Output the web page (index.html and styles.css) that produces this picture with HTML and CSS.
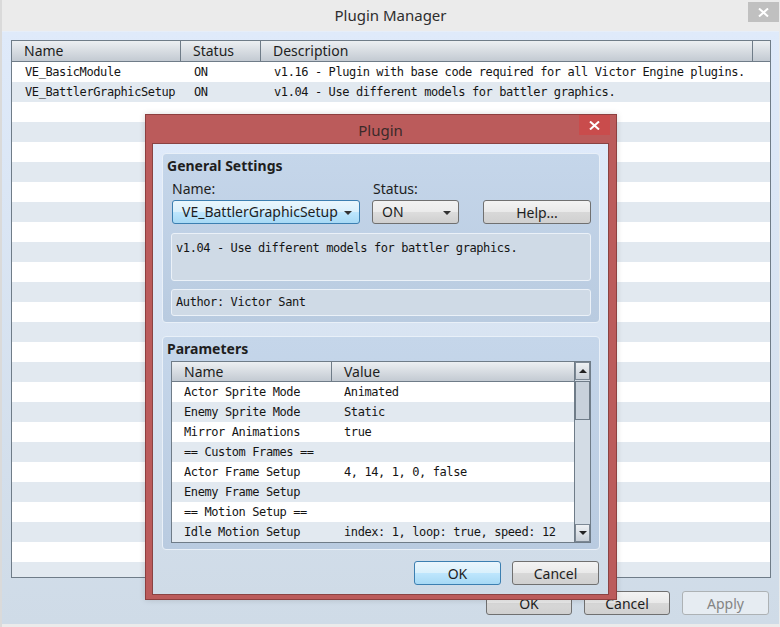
FILE: index.html
```html
<!DOCTYPE html>
<html lang="en">
<head>
    <meta charset="UTF-8">
    <meta name="viewport" content="width=device-width, initial-scale=1.0">
    <title>Plugin Manager</title>
    <link rel="stylesheet" href="styles.css">
</head>
<body>
    <div class="window">
        <div class="titlebar">
            <span class="title">Plugin Manager</span>
            <span class="close-btn gray">
                <svg width="11" height="9" viewBox="0 0 11 9"><path d="M1 0.5 L10 8.5 M10 0.5 L1 8.5" stroke="#fff" stroke-width="2"/></svg>
            </span>
        </div>

        <div class="client">
            <div class="grid">
                <div class="grid-head">
                    <div class="hcell">Name</div>
                    <div class="hcell">Status</div>
                    <div class="hcell">Description</div>
                    <div class="hcell last"></div>
                </div>
                <div class="grid-body" id="pluginRows">
                    <div class="grow"><span>VE_BasicModule</span><span>ON</span><span>v1.16 - Plugin with base code required for all Victor Engine plugins.</span></div>
                    <div class="grow"><span>VE_BattlerGraphicSetup</span><span>ON</span><span>v1.04 - Use different models for battler graphics.</span></div>
                </div>
            </div>
            <div class="footer">
                <button class="btn">OK</button>
                <button class="btn">Cancel</button>
                <button class="btn disabled">Apply</button>
            </div>
        </div>

        <!-- Plugin edit dialog, open on top of the manager -->
        <div class="dialog">
            <div class="dlg-title">
                <span class="title">Plugin</span>
                <span class="close-btn red">
                    <svg width="11" height="9" viewBox="0 0 11 9"><path d="M1 0.5 L10 8.5 M10 0.5 L1 8.5" stroke="#fff" stroke-width="2"/></svg>
                </span>
            </div>
            <div class="dlg-client">
                <div class="group general">
                    <div class="group-title">General Settings</div>
                    <div class="fields">
                        <label class="field-label">Name:</label>
                        <label class="field-label">Status:</label>
                        <span></span>
                        <div class="combo focused">VE_BattlerGraphicSetup<span class="arrow"></span></div>
                        <div class="combo">ON<span class="arrow"></span></div>
                        <button class="btn help">Help...</button>
                    </div>
                    <div class="textbox desc">v1.04 - Use different models for battler graphics.</div>
                    <div class="textbox author">Author: Victor Sant</div>
                </div>

                <div class="group params">
                    <div class="group-title">Parameters</div>
                    <div class="ptable">
                        <div class="plist">
                            <div class="phead">
                                <div class="hcell">Name</div>
                                <div class="hcell last">Value</div>
                            </div>
                            <div class="prow"><span>Actor Sprite Mode</span><span>Animated</span></div>
                            <div class="prow"><span>Enemy Sprite Mode</span><span>Static</span></div>
                            <div class="prow"><span>Mirror Animations</span><span>true</span></div>
                            <div class="prow"><span>== Custom Frames ==</span><span></span></div>
                            <div class="prow"><span>Actor Frame Setup</span><span>4, 14, 1, 0, false</span></div>
                            <div class="prow"><span>Enemy Frame Setup</span><span></span></div>
                            <div class="prow"><span>== Motion Setup ==</span><span></span></div>
                            <div class="prow"><span>Idle Motion Setup</span><span>index: 1, loop: true, speed: 12</span></div>
                        </div>
                        <div class="vscroll">
                            <div class="sbtn"><span class="tri up"></span></div>
                            <div class="track"><div class="thumb"></div></div>
                            <div class="sbtn"><span class="tri down"></span></div>
                        </div>
                    </div>
                </div>

                <div class="dlg-buttons">
                    <button class="btn default">OK</button>
                    <button class="btn">Cancel</button>
                </div>
            </div>
        </div>
    </div>

    <script>
        // fill the rest of the plugin list with empty striped rows
        const rowsEl = document.getElementById('pluginRows');
        for (let i = 0; i < 24; i++) {
            const row = document.createElement('div');
            row.className = 'grow';
            row.innerHTML = '<span></span><span></span><span></span>';
            rowsEl.appendChild(row);
        }
    </script>
</body>
</html>
```

FILE: styles.css
```css
body {
    margin: 0;
    width: 780px;
    height: 627px;
    overflow: hidden;
    font-family: "Noto Sans", "Liberation Sans", sans-serif;
    font-size: 14px;
    color: #1e1e1e;
}
button {
    font-family: inherit;
    font-size: 14px;
}
.window {
    position: relative;
    height: 627px;
    box-sizing: border-box;
    display: flex;
    flex-direction: column;
    background: #ebebeb;
    border-left: 2px solid #dadada;
    padding: 0 1px 3px 0;
}
.titlebar {
    height: 31px;
    display: grid;
    grid-template-columns: 1fr auto 1fr;
    line-height: 31px;
}
.title {
    grid-column: 2;
    font-size: 15px;
    color: #2e2e2e;
}
.close-btn {
    grid-column: 3;
    justify-self: end;
    align-self: start;
    width: 31px;
    height: 20px;
    display: flex;
    align-items: center;
    justify-content: center;
}
.close-btn.gray {
    margin-top: 2px;
    background: #c0c0c0;
}
.close-btn.red {
    background: #c94c4c;
    margin-right: -1px;
}
.client {
    flex: 1;
    min-height: 0;
    display: flex;
    flex-direction: column;
    padding: 8px 8px 9px 9px;
    background: linear-gradient(#dfeafa, #cfdbe7);
    border-top: 1px solid #e6eef9;
}
.grid {
    flex: 1;
    min-height: 0;
    border: 1px solid #6f7c88;
    background: #fff;
    overflow: hidden;
}
.grid-head, .grow {
    display: grid;
    grid-template-columns: 169px 80px 492px 1fr;
}
.grid-head {
    height: 20px;
    border-bottom: 1px solid #6f7c88;
}
.hcell {
    background: linear-gradient(#eceff2, #c3cad2);
    border-right: 1px solid #6f7c88;
    padding-left: 12px;
    line-height: 20px;
    font-size: 14px;
}
.hcell.last {
    border-right: none;
}
.grow, .prow, .textbox {
    font-family: "DejaVu Sans Mono", "Liberation Mono", monospace;
    font-size: 12px;
    letter-spacing: -0.4px;
    color: #141414;
}
.grow {
    height: 20px;
    line-height: 21px;
    white-space: nowrap;
}
.grow span {
    padding-left: 13px;
}
.grow:nth-child(even) {
    background: #e2e9f0;
}
.footer {
    display: flex;
    justify-content: flex-end;
    gap: 12px;
    margin-top: 13px;
    padding-right: 2px;
}
.btn {
    width: 86px;
    height: 24px;
    padding: 0;
    border: 1px solid #707070;
    border-radius: 3px;
    background: linear-gradient(#f3f3f3 0%, #e9e9e9 50%, #d8d8d8 51%, #d0d0d0 100%);
    color: #1e1e1e;
}
.btn.disabled {
    border-color: #adb2b5;
    background: #e6ecf2;
    color: #848484;
    width: 87px;
}
.btn.default {
    width: 87px;
    border-color: #3c7fb1;
    background: linear-gradient(#eaf6fd 0%, #d9f0fc 50%, #bee6fd 51%, #a7d9f5 100%);
}

/* dialog */
.dialog {
    position: absolute;
    left: 143px;
    top: 114px;
    width: 472px;
    height: 486px;
    box-sizing: border-box;
    border: 1px solid #8d3f3f;
    background: #bb5b5b;
    padding: 0 7px 5px 6px;
    display: flex;
    flex-direction: column;
    box-shadow: 0 0 6px rgba(0,0,0,0.15);
}
.dlg-title {
    height: 28px;
    display: grid;
    grid-template-columns: 1fr auto 1fr;
    line-height: 30px;
}
.dlg-title .title {
    color: #3a2a2a;
}
.dlg-client {
    flex: 1;
    border: 1px solid #8a4343;
    background: linear-gradient(#dfeafa, #cfdbe7);
    padding: 9px 8px 9px 9px;
    display: flex;
    flex-direction: column;
}
.group {
    border: 1px solid #e9f0f8;
    border-radius: 4px;
    background: linear-gradient(#c5d6ea, #b9cbe0);
    padding: 3px 8px 6px 8px;
}
.group-title {
    font-weight: bold;
    font-size: 14px;
    line-height: 18px;
    margin-left: -4px;
}
.fields {
    display: grid;
    grid-template-columns: 189px 87px 1fr;
    column-gap: 12px;
    row-gap: 3px;
    margin-top: 5px;
}
.field-label {
    line-height: 17px;
    font-size: 14px;
    padding-left: 1px;
}
.combo {
    position: relative;
    height: 24px;
    box-sizing: border-box;
    border: 1px solid #707070;
    border-radius: 3px;
    background: linear-gradient(#f2f2f2 0%, #ebebeb 50%, #dddddd 51%, #cfcfcf 100%);
    line-height: 22px;
    padding-left: 9px;
    white-space: nowrap;
}
.combo.focused {
    margin-left: 1px;
    border-color: #3c7fb1;
    background: linear-gradient(#eaf6fd 0%, #d9f0fc 50%, #bee6fd 51%, #a7d9f5 100%);
}
.arrow {
    position: absolute;
    right: 7px;
    top: 10px;
    border-left: 4px solid transparent;
    border-right: 4px solid transparent;
    border-top: 4px solid #333;
}
.btn.help {
    justify-self: end;
    width: 108px;
}
.textbox {
    box-sizing: border-box;
    border: 1px solid #ebf1f8;
    border-radius: 3px;
    background: #cfdae6;
    padding: 4px 4px 0;
    line-height: 20px;
}
.textbox.desc {
    height: 48px;
    margin-top: 9px;
}
.textbox.author {
    height: 27px;
    margin-top: 8px;
    padding-top: 2px;
}
.group.params {
    margin-top: 13px;
}
.ptable {
    display: flex;
    margin-top: 3px;
    height: 182px;
    box-sizing: border-box;
    border: 1px solid #6f7c88;
    background: #fff;
}
.plist {
    flex: 1;
}
.phead {
    display: grid;
    grid-template-columns: 160px 1fr;
    height: 19px;
    border-bottom: 1px solid #6f7c88;
}
.phead .hcell {
    line-height: 19px;
}
.prow {
    display: grid;
    grid-template-columns: 160px 1fr;
    height: 20px;
    line-height: 21px;
    white-space: nowrap;
}
.prow:nth-child(odd) {
    background: #e2e9f0;
}
.prow span {
    padding-left: 12px;
}
.vscroll {
    width: 15px;
    border-left: 1px solid #6f7c88;
    background: #d3dce5;
    display: flex;
    flex-direction: column;
}
.sbtn {
    height: 16px;
    border: 1px solid #7c8894;
    background: linear-gradient(#eef1f4, #c9d0d8);
    display: flex;
    align-items: center;
    justify-content: center;
}
.track {
    flex: 1;
    padding-top: 1px;
}
.thumb {
    height: 37px;
    border: 1px solid #6f7c88;
    background: #c8d1db;
}
.tri {
    border-left: 4px solid transparent;
    border-right: 4px solid transparent;
}
.tri.up {
    border-bottom: 4px solid #222;
}
.tri.down {
    border-top: 4px solid #222;
}
.dlg-buttons {
    display: flex;
    justify-content: flex-end;
    gap: 11px;
    margin-top: 11px;
    padding-right: 1px;
}
.dlg-buttons .btn {
    width: 87px;
}
```
